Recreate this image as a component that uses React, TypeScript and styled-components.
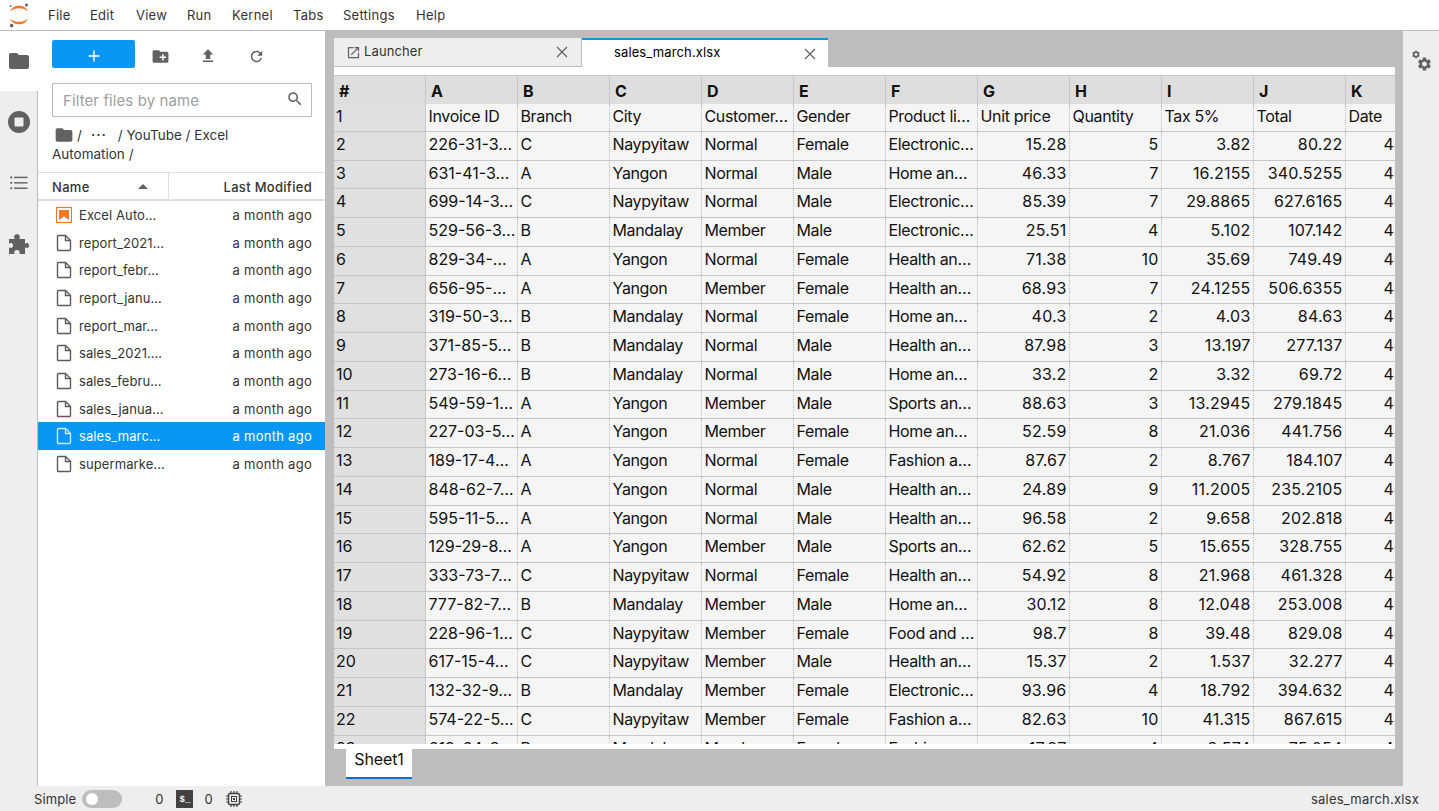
import React from "react";
import styled, { createGlobalStyle } from "styled-components";

const Global = createGlobalStyle`
  html, body { margin: 0; padding: 0; height: 100%; overflow: hidden; }
  body { font-family: Inter, "Liberation Sans", sans-serif; color: rgba(0,0,0,.87); }
  #root { height: 100%; }
  * { box-sizing: border-box; }
`;

const Page = styled.div`display:flex;flex-direction:column;width:1439px;height:811px;background:#eee;overflow:hidden;`;
const TopBar = styled.header`display:flex;align-items:center;height:31px;flex:none;background:#fff;border-bottom:1px solid #bdbdbd;`;
const LogoSlot = styled.div`width:38px;height:30px;display:flex;align-items:center;justify-content:center;flex:none;`;
const Menu = styled.nav`display:flex;padding-left:10px;`;
const MenuItem = styled.span<{ $w: number }>`width:${p => p.$w}px;font-size:13px;letter-spacing:.25px;line-height:30px;color:#333;`;

const Middle = styled.div`flex:1;min-height:0;display:flex;`;
const ActivityBar = styled.aside`width:38px;flex:none;display:flex;flex-direction:column;background:#eee;`;
const ActivityTab = styled.div<{ $active?: boolean }>`
  height:${p => (p.$active ? 60 : 61)}px;display:flex;align-items:center;justify-content:center;color:#616161;flex:none;
  background:${p => (p.$active ? "#fff" : "#eee")};
  border-right:${p => (p.$active ? "none" : "1px solid #bdbdbd")};
`;
const ActivityRest = styled.div`flex:1;border-right:1px solid #bdbdbd;`;

const FilePanel = styled.section`width:287px;flex:none;background:#fff;display:flex;flex-direction:column;`;
const PanelTools = styled.div`display:flex;align-items:center;padding:9px 0 0 14px;height:37px;flex:none;`;
const NewButton = styled.div`width:83px;height:28px;background:#0a96f5;border-radius:2px;display:flex;align-items:center;justify-content:center;color:#fff;margin-right:13px;padding-top:4px;`;
const ToolIcon = styled.div`width:24px;height:24px;margin:4px 24px 0 0;display:flex;align-items:center;justify-content:center;color:#616161;`;
const FilterBox = styled.div`
  margin:15px 13px 0 14px;height:34px;border:1px solid #bdbdbd;display:flex;align-items:center;justify-content:space-between;
  padding:0 7px 0 10px;flex:none;color:#616161;
`;
const FilterText = styled.span`font-size:15px;color:#9e9e9e;letter-spacing:.1px;`;
const SearchGlyph = styled.span`display:flex;margin-top:-3px;`;
const Crumbs = styled.div`margin:9px 0 0 14px;width:205px;font-size:13.5px;line-height:19px;color:#333;height:37px;flex:none;`;
const CrumbFolder = styled.span`display:inline-block;height:14px;vertical-align:-2px;margin:0 3px 0 2px;color:#616161;svg{display:block;margin-top:-3px;}`;
const CrumbDots = styled.span`margin:0 11px 0 9px;letter-spacing:1px;font-weight:600;`;
const HeaderRow = styled.div`
  margin-top:9px;height:29px;display:flex;flex:none;align-items:center;border-top:1px solid #e0e0e0;border-bottom:2px solid #e0e0e0;
  font-size:13px;font-weight:500;color:#333;letter-spacing:.3px;
`;
const HeadName = styled.div`width:131px;height:100%;display:flex;align-items:center;justify-content:space-between;padding:1px 20px 0 14px;border-right:1px solid #e0e0e0;`;
const HeadDate = styled.div`flex:1;text-align:right;padding:1px 13px 0 0;`;
const Caret = styled.span`width:0;height:0;border-left:5px solid transparent;border-right:5px solid transparent;border-bottom:5px solid #616161;`;
const FileList = styled.div`flex:1;padding-top:.3px;`;
const FileRow = styled.div<{ $selected?: boolean }>`
  height:27.65px;display:flex;align-items:center;padding:0 13px 0 18px;font-size:13px;
  background:${p => (p.$selected ? "#0a96f5" : "#fff")};
  color:${p => (p.$selected ? "#fff" : "#333")};
`;
const FileName = styled.span`margin-left:7px;flex:1;white-space:nowrap;overflow:hidden;letter-spacing:.1px;`;
const FileDate = styled.span`white-space:nowrap;letter-spacing:.27px;`;

const Workspace = styled.main`flex:1;min-width:0;background:#bdbdbd;padding:7px 8px 7px 9px;display:flex;flex-direction:column;`;
const TabBar = styled.div`display:flex;height:29px;flex:none;`;
const DocTab = styled.div<{ $active?: boolean }>`
  width:${p => (p.$active ? 246 : 247)}px;height:${p => (p.$active ? 30 : 29)}px;margin-right:${p => (p.$active ? 0 : 1)}px;flex:none;
  display:flex;align-items:center;font-size:13px;letter-spacing:.12px;color:${p => (p.$active ? "#000" : "#333")};
  background:${p => (p.$active ? "#fff" : "#eee")};
  border-top:${p => (p.$active ? "2px solid #0a96f5" : "none")};
  border-bottom:${p => (p.$active ? "none" : "1px solid #bdbdbd")};
  padding:0 ${p => (p.$active ? 10 : 11)}px 0 ${p => (p.$active ? 32 : 12)}px;
`;
const TabTitle = styled.span<{ $active?: boolean }>`flex:1;margin-left:${p => (p.$active ? 0 : 3)}px;padding-bottom:${p => (p.$active ? 4 : 2)}px;`;
const TabIcon = styled.span`display:flex;color:#616161;`;
const SheetArea = styled.div`height:682px;flex:none;background:#fff;padding:8px 0 5px;display:flex;overflow:hidden;`;
const Grid = styled.div`width:100%;overflow:hidden;border-top:1px solid #c4c4c4;`;
const Row = styled.div<{ $head?: boolean; $first?: boolean }>`
  display:grid;grid-template-columns:repeat(12,92px);width:1104px;
  height:${p => (p.$head ? 28 : p.$first ? 27.75 : 28.75)}px;
  background:${p => (p.$head ? "#dedede" : "#f5f5f5")};
  border-bottom:${p => (p.$head ? "none" : "1px solid #c6c6c6")};
`;
const Cell = styled.div<{ $kind?: "num" | "id" | "text" }>`
  font-size:16px;line-height:25px;color:#111;white-space:nowrap;overflow:hidden;
  padding:${p => (p.$kind === "num" ? "0 2.5px 0 0" : "0 0 0 2.5px")};
  text-align:${p => (p.$kind === "num" ? "right" : "left")};
  letter-spacing:${p => (p.$kind === "num" ? ".2px" : p.$kind === "id" ? "0" : "-.35px")};
  border-right:1px dotted #bbb;
`;
const HeadCell = styled.div`
  font-size:16px;font-weight:700;line-height:30px;color:#111;padding:0 5px;border-right:1px solid #c6c6c6;
`;
const IndexCell = styled.div`
  font-size:16px;line-height:25px;color:#111;padding:0 2px;background:#e0e0e0;border-right:1px solid #c6c6c6;
`;
const SheetTabs = styled.div`height:30px;flex:none;padding-left:12px;display:flex;`;
const SheetTab = styled.div`width:66px;height:30px;background:#fff;border-bottom:2px solid #0a6fd8;font-size:16px;line-height:21px;color:#111;text-align:center;letter-spacing:-.1px;`;

const RightBar = styled.aside`width:36px;flex:none;background:#eee;display:flex;justify-content:center;padding-top:18px;color:#616161;`;

const StatusBar = styled.footer`height:25px;flex:none;background:#eee;display:flex;align-items:center;font-size:13px;letter-spacing:.1px;color:#333;padding:0 20px 0 34px;`;
const Toggle = styled.div`width:40px;height:18px;border-radius:9px;background:#bdbdbd;margin-left:6px;padding:3px 4px;flex:none;`;
const Knob = styled.div`width:12px;height:12px;border-radius:50%;background:#fff;`;
const Count = styled.span<{ $ml: number }>`margin-left:${p => p.$ml}px;`;
const TermIcon = styled.span`
  width:17px;height:18px;background:#424242;color:#fff;font-family:"Liberation Mono",monospace;font-size:9px;font-weight:700;
  margin-left:13px;display:flex;align-items:center;justify-content:center;padding-top:2px;
`;
const ChipSlot = styled.span`margin-left:13px;display:flex;color:#424242;`;
const StatusRight = styled.span`margin-left:auto;letter-spacing:.22px;`;

const P = {
  folder: "M10 4H4c-1.1 0-1.99.9-1.99 2L2 18c0 1.1.9 2 2 2h16c1.1 0 2-.9 2-2V8c0-1.1-.9-2-2-2h-8l-2-2z",
  newFolder: "M20 6h-8l-2-2H4c-1.11 0-1.99.89-1.99 2L2 18c0 1.11.89 2 2 2h16c1.11 0 2-.89 2-2V8c0-1.11-.89-2-2-2zm-1 8h-3v3h-2v-3h-3v-2h3V9h2v3h3v2z",
  upload: "M9 16h6v-6h4l-7-7-7 7h4zm-4 2h14v2H5z",
  refresh: "M17.65 6.35C16.2 4.9 14.21 4 12 4c-4.42 0-7.99 3.58-7.99 8s3.57 8 7.99 8c3.73 0 6.84-2.55 7.73-6h-2.08c-.82 2.33-3.04 4-5.65 4-3.31 0-6-2.69-6-6s2.69-6 6-6c1.66 0 3.14.69 4.22 1.78L13 11h7V4l-2.35 2.35z",
  search: "M15.5 14h-.79l-.28-.27C15.41 12.59 16 11.11 16 9.5 16 5.91 13.09 3 9.5 3S3 5.91 3 9.5 5.91 16 9.5 16c1.61 0 3.09-.59 4.23-1.57l.27.28v.79l5 4.99L20.49 19l-4.99-5zm-6 0C7.01 14 5 11.99 5 9.5S7.01 5 9.5 5 14 7.01 14 9.5 11.99 14 9.5 14z",
  launch: "M19 19H5V5h7V3H5c-1.11 0-2 .9-2 2v14c0 1.1.89 2 2 2h14c1.1 0 2-.9 2-2v-7h-2v7zM14 3v2h3.59l-9.83 9.83 1.41 1.41L19 6.41V10h2V3h-7z",
  gear: "M19.14 12.94c.04-.3.06-.61.06-.94 0-.32-.02-.64-.07-.94l2.03-1.58c.18-.14.23-.41.12-.61l-1.92-3.32c-.12-.22-.37-.29-.59-.22l-2.39.96c-.5-.38-1.03-.7-1.62-.94l-.36-2.54c-.04-.24-.24-.41-.48-.41h-3.84c-.24 0-.43.17-.47.41l-.36 2.54c-.59.24-1.13.57-1.62.94l-2.39-.96c-.22-.08-.47 0-.59.22L2.74 8.87c-.12.21-.08.47.12.61l2.03 1.58c-.05.3-.09.63-.09.94s.02.64.07.94l-2.03 1.58c-.18.14-.23.41-.12.61l1.92 3.32c.12.22.37.29.59.22l2.39-.96c.5.38 1.03.7 1.62.94l.36 2.54c.05.24.24.41.48.41h3.84c.24 0 .44-.17.47-.41l.36-2.54c.59-.24 1.13-.56 1.62-.94l2.39.96c.22.08.47 0 .59-.22l1.92-3.32c.12-.22.07-.47-.12-.61l-2.01-1.58zM12 15.6c-1.98 0-3.6-1.62-3.6-3.6s1.62-3.6 3.6-3.6 3.6 1.62 3.6 3.6-1.62 3.6-3.6 3.6z",
  puzzle: "M1 5H6C6.5 5 6.8 4.6 6.4 4C5.8 3 6 .3 9 .3C12 .3 12.2 3 11.6 4C11.2 4.6 11.5 5 12 5H17V9C17 9.5 17.4 9.8 18 9.4C19 8.8 21 9 21 11.5C21 14 19 14.2 18 13.6C17.4 13.2 17 13.5 17 14V20H12C11.5 20 11.2 19.6 11.6 19C12.2 18 11.5 16 9 16C6.5 16 5.8 18 6.4 19C6.8 19.6 6.5 20 6 20H1V14C1 13.5 1.4 13.2 2 13.6C3 14.2 5 14 5 11.5C5 9 3 8.8 2 9.4C1.4 9.8 1 9.5 1 9Z",
};

const Ico = ({ d, s = 24 }: { d: string; s?: number }) => (
  <svg width={s} height={s} viewBox="0 0 24 24" fill="currentColor"><path d={d} /></svg>
);

const Logo = () => (
  <svg width="22" height="26" viewBox="0 0 22 26">
    <path d="M2 9.5C4 5.2 7 3.8 11 3.8s7 1.4 9 5.7C17.5 7 14.5 6.2 11 6.2S4.5 7 2 9.5z" fill="#f37726" />
    <path d="M2 16.5C4 20.8 7 22.2 11 22.2s7-1.4 9-5.7C17.5 19 14.5 19.8 11 19.8S4.5 19 2 16.5z" fill="#f37726" />
    <circle cx="18.5" cy="3" r="1.5" fill="#616161" />
    <circle cx="2.6" cy="4" r="1" fill="#757575" />
    <circle cx="3.6" cy="23.6" r="1.8" fill="#616161" />
  </svg>
);

const FileIcon = () => (
  <svg width="16" height="18" viewBox="0 0 16 18" fill="none" stroke="currentColor" strokeWidth="1.4" style={{ flex: "none", opacity: 0.8 }}>
    <path d="M1.5 2.5a1 1 0 0 1 1-1h7l5 5v9a1 1 0 0 1-1 1h-11a1 1 0 0 1-1-1z" />
    <path d="M9.5 1.5v5h5" />
  </svg>
);

const NotebookIcon = () => (
  <svg width="16" height="18" viewBox="0 0 16 18" style={{ flex: "none" }}>
    <rect x="0.5" y="1.5" width="15" height="15" fill="none" stroke="#f37726" strokeWidth="1.2" />
    <path d="M3 4h10v10l-5-3.5L3 14z" fill="#f37726" />
  </svg>
);

const Close = () => (
  <svg width="16" height="16" viewBox="0 0 16 16" fill="none" stroke="#616161" strokeWidth="1.2"><path d="M3 3l10 10M13 3L3 13" /></svg>
);

const Stop = () => (
  <svg width="24" height="24" viewBox="0 0 24 24"><circle cx="12" cy="12" r="11" fill="currentColor" /><rect x="7.5" y="7.5" width="9" height="9" rx="1" fill="#eee" /></svg>
);

const Toc = () => (
  <svg width="18" height="18" viewBox="0 0 20 20" fill="currentColor">
    <rect x="4.5" y="3" width="15" height="1.6" /><rect x="4.5" y="9" width="15" height="1.6" /><rect x="4.5" y="15" width="15" height="1.6" />
    <circle cx="1.4" cy="3.8" r="1.2" /><circle cx="1.4" cy="9.8" r="1.2" /><circle cx="1.4" cy="15.8" r="1.2" />
  </svg>
);

const Puzzle = () => (
  <svg width="21" height="20" viewBox="0 0 21 20" fill="currentColor"><path d={P.puzzle} /></svg>
);

const Gears = () => (
  <svg width="22" height="22" viewBox="0 0 22 22" fill="currentColor">
    <g transform="translate(1.2 .7) scale(.4)"><path d={P.gear} /></g>
    <g transform="translate(6.3 6.8) scale(.68)"><path d={P.gear} /></g>
  </svg>
);

const Chip = () => (
  <svg width="16" height="16" viewBox="0 0 16 16" fill="none" stroke="currentColor">
    <rect x="2.5" y="2.5" width="11" height="11" rx="1.5" strokeWidth="1.4" />
    <rect x="5.5" y="5.5" width="5" height="5" strokeWidth="1" />
    <rect x="7" y="7" width="2" height="2" fill="currentColor" stroke="none" />
    <path d="M5 0v2.5M8 0v2.5M11 0v2.5M5 13.5V16M8 13.5V16M11 13.5V16M0 5h2.5M0 8h2.5M0 11h2.5M13.5 5H16M13.5 8H16M13.5 11H16" strokeWidth="1.2" />
  </svg>
);

const menus: [string, number][] = [["File", 42], ["Edit", 46], ["View", 51], ["Run", 45], ["Kernel", 61], ["Tabs", 50], ["Settings", 73], ["Help", 40]];

const files = ["Excel Auto…", "report_2021…", "report_febr…", "report_janu…", "report_mar…", "sales_2021.…", "sales_febru…", "sales_janua…", "sales_marc…", "supermarke…"];

const E = "Electronic…", HA = "Health an…", HO = "Home an…", SP = "Sports an…", FA = "Fashion a…";
const N = "Naypyitaw", Y = "Yangon", M = "Mandalay";
type R = [string, string, string, string, string, string, string, string, string, string];
const rows: R[] = [
  ["226-31-3…", "C", N, "Normal", "Female", E, "15.28", "5", "3.82", "80.22"],
  ["631-41-3…", "A", Y, "Normal", "Male", HO, "46.33", "7", "16.2155", "340.5255"],
  ["699-14-3…", "C", N, "Normal", "Male", E, "85.39", "7", "29.8865", "627.6165"],
  ["529-56-3…", "B", M, "Member", "Male", E, "25.51", "4", "5.102", "107.142"],
  ["829-34-…", "A", Y, "Normal", "Female", HA, "71.38", "10", "35.69", "749.49"],
  ["656-95-…", "A", Y, "Member", "Female", HA, "68.93", "7", "24.1255", "506.6355"],
  ["319-50-3…", "B", M, "Normal", "Female", HO, "40.3", "2", "4.03", "84.63"],
  ["371-85-5…", "B", M, "Normal", "Male", HA, "87.98", "3", "13.197", "277.137"],
  ["273-16-6…", "B", M, "Normal", "Male", HO, "33.2", "2", "3.32", "69.72"],
  ["549-59-1…", "A", Y, "Member", "Male", SP, "88.63", "3", "13.2945", "279.1845"],
  ["227-03-5…", "A", Y, "Member", "Female", HO, "52.59", "8", "21.036", "441.756"],
  ["189-17-4…", "A", Y, "Normal", "Female", FA, "87.67", "2", "8.767", "184.107"],
  ["848-62-7…", "A", Y, "Normal", "Male", HA, "24.89", "9", "11.2005", "235.2105"],
  ["595-11-5…", "A", Y, "Normal", "Male", HA, "96.58", "2", "9.658", "202.818"],
  ["129-29-8…", "A", Y, "Member", "Male", SP, "62.62", "5", "15.655", "328.755"],
  ["333-73-7…", "C", N, "Normal", "Female", HA, "54.92", "8", "21.968", "461.328"],
  ["777-82-7…", "B", M, "Member", "Male", HO, "30.12", "8", "12.048", "253.008"],
  ["228-96-1…", "C", N, "Member", "Female", "Food and …", "98.7", "8", "39.48", "829.08"],
  ["617-15-4…", "C", N, "Member", "Male", HA, "15.37", "2", "1.537", "32.277"],
  ["132-32-9…", "B", M, "Member", "Female", E, "93.96", "4", "18.792", "394.632"],
  ["574-22-5…", "C", N, "Member", "Female", FA, "82.63", "10", "41.315", "867.615"],
  ["619-64-3…", "B", M, "Member", "Female", FA, "17.87", "4", "3.574", "75.054"],
];

const heads = ["#", "A", "B", "C", "D", "E", "F", "G", "H", "I", "J", "K"];
const titles = ["Invoice ID", "Branch", "City", "Customer…", "Gender", "Product li…", "Unit price", "Quantity", "Tax 5%", "Total", "Date"];

const kindOf = (j: number) => (j >= 6 ? "num" : j === 0 ? "id" : "text") as "num" | "id" | "text";

export default function App() {
  return (
    <Page>
      <Global />
      <TopBar>
        <LogoSlot><Logo /></LogoSlot>
        <Menu>{menus.map(([m, w]) => <MenuItem key={m} $w={w}>{m}</MenuItem>)}</Menu>
      </TopBar>
      <Middle>
        <ActivityBar>
          <ActivityTab $active><Ico d={P.folder} /></ActivityTab>
          <ActivityTab><Stop /></ActivityTab>
          <ActivityTab><Toc /></ActivityTab>
          <ActivityTab><Puzzle /></ActivityTab>
          <ActivityRest />
        </ActivityBar>
        <FilePanel>
          <PanelTools>
            <NewButton>
              <svg width="14" height="14" viewBox="0 0 14 14" stroke="currentColor" strokeWidth="1.4"><path d="M7 1.5v11M1.5 7h11" /></svg>
            </NewButton>
            <ToolIcon><Ico d={P.newFolder} s={19} /></ToolIcon>
            <ToolIcon><Ico d={P.upload} s={18} /></ToolIcon>
            <ToolIcon><Ico d={P.refresh} s={17} /></ToolIcon>
          </PanelTools>
          <FilterBox>
            <FilterText>Filter files by name</FilterText>
            <SearchGlyph><Ico d={P.search} s={18} /></SearchGlyph>
          </FilterBox>
          <Crumbs>
            <CrumbFolder><Ico d={P.folder} s={20} /></CrumbFolder>/<CrumbDots>···</CrumbDots>/ YouTube / Excel Automation /
          </Crumbs>
          <HeaderRow>
            <HeadName>Name<Caret /></HeadName>
            <HeadDate>Last Modified</HeadDate>
          </HeaderRow>
          <FileList>
            {files.map((f, i) => (
              <FileRow key={f} $selected={i === 8}>
                {i === 0 ? <NotebookIcon /> : <FileIcon />}
                <FileName>{f}</FileName>
                <FileDate>a month ago</FileDate>
              </FileRow>
            ))}
          </FileList>
        </FilePanel>
        <Workspace>
          <TabBar>
            <DocTab>
              <TabIcon><Ico d={P.launch} s={15} /></TabIcon>
              <TabTitle>Launcher</TabTitle>
              <Close />
            </DocTab>
            <DocTab $active>
              <TabTitle $active>sales_march.xlsx</TabTitle>
              <Close />
            </DocTab>
          </TabBar>
          <SheetArea>
            <Grid>
              <Row $head>{heads.map(h => <HeadCell key={h}>{h}</HeadCell>)}</Row>
              <Row $first>
                <IndexCell>1</IndexCell>
                {titles.map(t => <Cell key={t} $kind="text">{t}</Cell>)}
              </Row>
              {rows.map((r, i) => (
                <Row key={i}>
                  <IndexCell>{i + 2}</IndexCell>
                  {r.map((c, j) => <Cell key={j} $kind={kindOf(j)}>{c}</Cell>)}
                  <Cell $kind="num">44256</Cell>
                </Row>
              ))}
            </Grid>
          </SheetArea>
          <SheetTabs><SheetTab>Sheet1</SheetTab></SheetTabs>
        </Workspace>
        <RightBar><Gears /></RightBar>
      </Middle>
      <StatusBar>
        <span>Simple</span>
        <Toggle><Knob /></Toggle>
        <Count $ml={33}>0</Count>
        <TermIcon>$_</TermIcon>
        <Count $ml={11}>0</Count>
        <ChipSlot><Chip /></ChipSlot>
        <StatusRight>sales_march.xlsx</StatusRight>
      </StatusBar>
    </Page>
  );
}
